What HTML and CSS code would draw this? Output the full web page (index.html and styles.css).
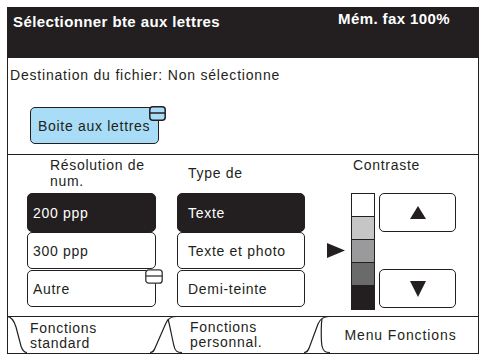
FILE: index.html
```html
<!DOCTYPE html>
<html lang="fr">
<head>
<meta charset="utf-8">
<title>Sélectionner bte aux lettres</title>
<link rel="stylesheet" href="styles.css">
</head>
<body>
<div class="screen">
  <header class="titlebar">
    <span class="title">Sélectionner bte aux lettres</span>
    <span class="mem">Mém. fax 100%</span>
  </header>

  <section class="dest">
    <p class="dest-text">Destination du fichier: Non sélectionne</p>
    <button class="mailbox">Boite aux lettres
      <svg class="corner-icon blue" width="17" height="15" viewBox="0 0 17 15"><rect x="0.8" y="0.8" width="15.4" height="13.4" rx="3" ry="3"/><line x1="0.8" y1="7" x2="16.2" y2="7"/></svg>
    </button>
  </section>

  <section class="panel">
    <div class="col res">
      <div class="col-head">Résolution de<br>num.</div>
      <div class="opt sel first">200 ppp</div>
      <div class="opt second">300 ppp</div>
      <div class="opt third">Autre
        <svg class="corner-icon white" width="18" height="15" viewBox="0 0 18 15"><rect x="0.8" y="0.8" width="16.4" height="13.4" rx="3" ry="3"/><line x1="0.8" y1="7" x2="17.2" y2="7"/></svg>
      </div>
    </div>

    <div class="col type">
      <div class="col-head one">Type de</div>
      <div class="opt sel first">Texte</div>
      <div class="opt second">Texte et photo</div>
      <div class="opt third">Demi-teinte</div>
    </div>

    <div class="col contrast">
      <div class="col-head cont">Contraste</div>
      <div class="cont-body">
        <svg class="pointer" width="18" height="15" viewBox="0 0 18 15"><polygon points="0,0 18,7.5 0,15"/></svg>
        <div class="scale">
          <div class="seg s1"></div>
          <div class="seg s2"></div>
          <div class="seg s3"></div>
          <div class="seg s4"></div>
          <div class="seg s5"></div>
        </div>
        <div class="arrows">
          <div class="arrow-btn"><svg width="16" height="13" viewBox="0 0 16 13"><polygon points="8,0 16,13 0,13"/></svg></div>
          <div class="arrow-btn"><svg width="16" height="16" viewBox="0 0 16 16"><polygon points="0,0 16,0 8,16"/></svg></div>
        </div>
      </div>
    </div>
  </section>

  <nav class="tabs">
    <svg class="tab-lines" width="470" height="37" viewBox="0 0 470 37">
      <path d="M0,0.5 H470"/>
      <path d="M-1,0.5 C4,1 6,5 8,11 L13,30 C14.5,35 16,36.5 19,36.5"/>
      <path d="M142,36.5 C145,36.5 146,35 147.5,31 L158,7 C160,2 163,0.5 169,0.5"/>
      <path d="M160,3 C162,10 164,22 166,30 C167,35 169,36.5 174,36.5"/>
      <path d="M296,36.5 C299,36.5 300,35 301.5,31 L310,8 C312,3 315,0.5 321,0.5"/>
      <path d="M314,3 C313,8 313,25 314,30 C315,35 317,36.5 322,36.5"/>
    </svg>
    <div class="tab-labels">
      <span class="tab t1">Fonctions<br>standard</span>
      <span class="tab t2">Fonctions<br>personnal.</span>
      <span class="tab t3">Menu Fonctions</span>
    </div>
  </nav>
</div>
</body>
</html>
```

FILE: styles.css
```css
* { box-sizing: border-box; }

html, body {
  margin: 0;
  padding: 0;
  background: #ffffff;
}

body {
  font-family: "Liberation Sans", Arial, sans-serif;
  font-size: 14px;
  color: #231f20;
  letter-spacing: 0.7px;
}

.screen {
  margin: 7px 0 0 7px;
  width: 472px;
  height: 347px;
  border-left: 1px solid #231f20;
  border-right: 1px solid #231f20;
  border-bottom: 1px solid #231f20;
  display: flex;
  flex-direction: column;
}

.titlebar {
  height: 51px;
  margin: 0 -1px;
  background: #231f20;
  color: #ffffff;
  font-weight: bold;
  font-size: 15px;
  line-height: 15px;
  letter-spacing: 0.4px;
  display: flex;
  justify-content: space-between;
  align-items: flex-start;
  padding: 4px 29px 0 6px;
}

.title { margin-top: 3px; }

.dest {
  height: 97px;
  border-bottom: 1px solid #231f20;
  padding: 9px 0 0 2px;
}

.dest-text {
  margin: 0;
  line-height: 16px;
  letter-spacing: 0.8px;
}

.mailbox {
  position: relative;
  margin: 24px 0 0 20px;
  width: 129px;
  height: 37px;
  padding: 0 0 0 7px;
  text-align: left;
  font: inherit;
  letter-spacing: 0.7px;
  color: #231f20;
  background: #a9dcf6;
  border: 1px solid #231f20;
  border-radius: 5px;
}

.corner-icon {
  position: absolute;
  display: block;
  stroke: #231f20;
  stroke-width: 1.5;
}
.corner-icon.blue { fill: #a9dcf6; top: -2px; right: -8px; }
.corner-icon.white { fill: #ffffff; top: -2px; right: -8px; stroke: #333; stroke-width: 1.3; }

.panel {
  height: 161px;
  display: flex;
  padding-left: 19px;
}

.col {
  display: flex;
  flex-direction: column;
}

.res { width: 129px; }
.type { width: 128px; margin-left: 21px; }
.contrast { width: 129px; margin-left: 22px; }

.col-head {
  height: 38px;
  line-height: 16px;
  padding: 2px 0 0 23px;
}
.col-head.one { padding: 10px 0 0 11px; }
.col-head.cont { padding: 2px 0 0 26px; }

.opt {
  position: relative;
  border: 1px solid #231f20;
  border-radius: 5px;
  display: flex;
  align-items: center;
  padding-left: 5px;
  background: #ffffff;
}
.type .opt { padding-left: 10px; }

.opt.first { height: 39px; }
.opt.second { height: 37px; }
.opt.third { height: 37px; margin-top: 1px; }

.opt.sel {
  background: #231f20;
  color: #ffffff;
}

.cont-body {
  display: flex;
  align-items: flex-start;
}

.pointer {
  display: block;
  fill: #231f20;
  margin-top: 50px;
}

.scale {
  margin-left: 6px;
  width: 24px;
  border: 1px solid #231f20;
  display: flex;
  flex-direction: column;
}

.seg {
  height: 23px;
  border-top: 1px solid #231f20;
}
.seg.s1 { border-top: none; height: 22px; background: #ffffff; }
.seg.s2 { background: #c6c6c6; }
.seg.s3 { background: #9a9a9c; }
.seg.s4 { background: #6b6a6b; }
.seg.s5 { background: #231f20; height: 24px; }

.arrows {
  margin-left: 4px;
  width: 77px;
  height: 115px;
  display: flex;
  flex-direction: column;
  justify-content: space-between;
}

.arrow-btn {
  height: 39px;
  border: 1px solid #231f20;
  border-radius: 5px;
  display: flex;
  align-items: center;
  justify-content: center;
}
.arrow-btn svg { display: block; fill: #231f20; }

.tabs {
  height: 37px;
  display: grid;
}

.tab-lines,
.tab-labels {
  grid-area: 1 / 1;
}

.tab-lines {
  display: block;
  fill: none;
  stroke: #231f20;
  stroke-width: 1.2;
  overflow: visible;
}

.tab-labels {
  display: flex;
  line-height: 15px;
}

.tab { display: block; }
.t1 { width: 160px; padding: 5px 0 0 22px; }
.t2 { width: 155px; padding: 4px 0 0 22px; }
.t3 { width: 155px; padding: 12px 0 0 0; text-align: center; letter-spacing: 0.9px; }
```
